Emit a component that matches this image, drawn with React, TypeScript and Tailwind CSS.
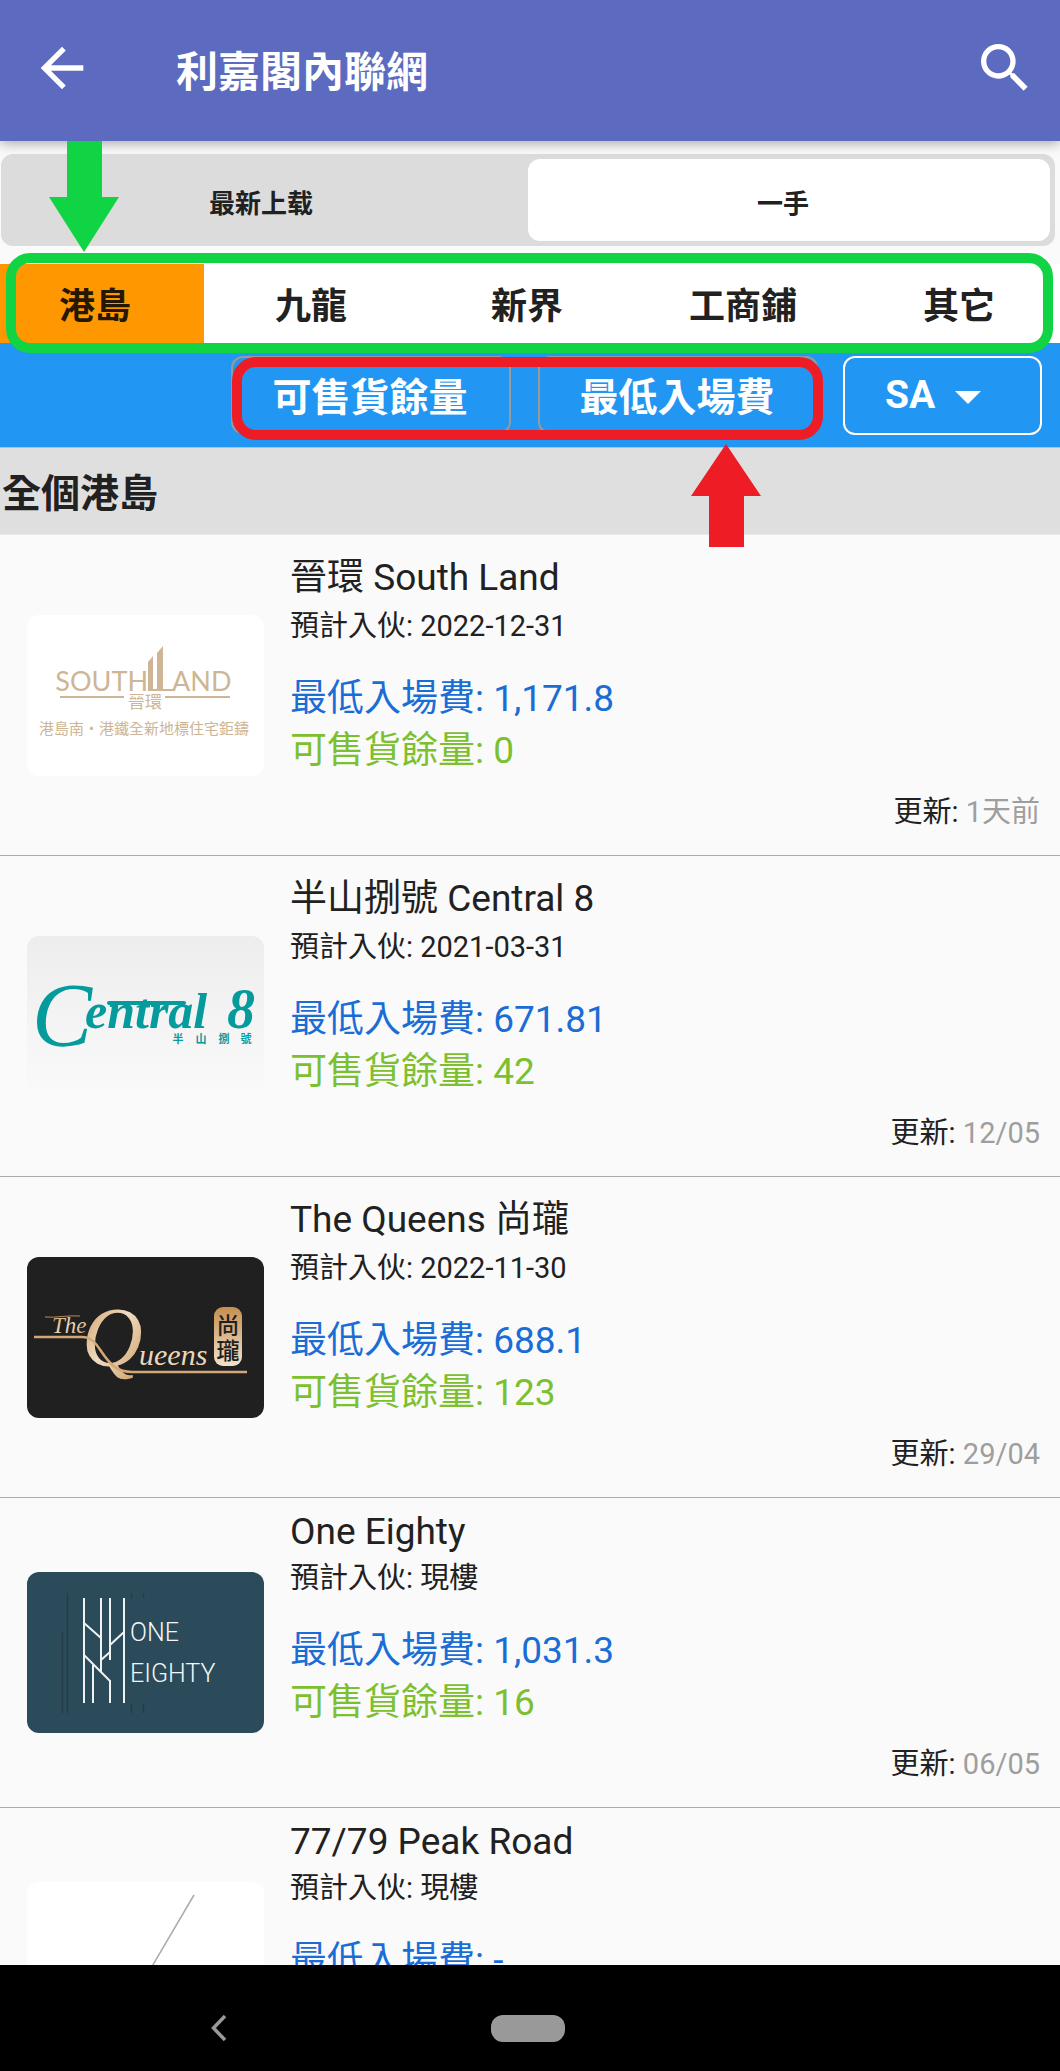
import React from "react";
import { MdArrowBack, MdSearch } from "react-icons/md";

const serif = "Liberation Serif, serif";
const cjk = "Noto Sans CJK TC, sans-serif";

function SouthLandLogo() {
  return (
    <svg viewBox="0 0 237 161" className="h-full w-full bg-white" role="img" aria-label="South Land">
      <g fill="#cdb595">
        <text x="121" y="76" fontSize="27" textAnchor="end" fontFamily="Lato, sans-serif">SOUTH</text>
        <text x="145" y="76" fontSize="27" fontFamily="Lato, sans-serif">AND</text>
        <path d="M121 76V47l5-6v33h4V38l6-7v43h11v2z" />
        <path d="M33 81h64v2H33zM138 81h65v2h-65z" />
        <text x="118" y="93" fontSize="17" textAnchor="middle" fontFamily={cjk}>晉環</text>
        <text x="117" y="119" fontSize="15" textAnchor="middle" fontFamily={cjk}>港島南·港鐵全新地標住宅鉅鑄</text>
      </g>
    </svg>
  );
}

function CentralLogo() {
  return (
    <svg
      viewBox="0 0 237 161"
      className="h-full w-full bg-linear-to-b from-[#ededed] to-[#fafafa]"
      role="img"
      aria-label="Central 8"
    >
      <g fill="#059a9c" fontFamily={serif} fontStyle="italic">
        <text x="5" y="110" fontSize="90">C</text>
        <text x="58" y="92" fontSize="50" fontWeight="700">entral</text>
        <text x="200" y="92" fontSize="56" fontWeight="700">8</text>
      </g>
      <path d="M82 67h75" stroke="#059a9c" strokeWidth="4" strokeLinecap="round" />
      <g fill="#059a9c" fontSize="11" fontFamily={cjk} fontWeight="700" textAnchor="middle">
        <text x="151" y="107">半</text>
        <text x="174" y="107">山</text>
        <text x="197" y="107">捌</text>
        <text x="219" y="107">號</text>
      </g>
    </svg>
  );
}

function QueensLogo() {
  return (
    <svg viewBox="0 0 237 161" className="h-full w-full bg-[#202020]" role="img" aria-label="The Queens">
      <defs>
        <linearGradient id="gold" x1="0" y1="0" x2="1" y2="1">
          <stop offset="0" stopColor="#c79255" />
          <stop offset="0.5" stopColor="#f0dcc0" />
          <stop offset="1" stopColor="#c9985f" />
        </linearGradient>
        <linearGradient id="badge" x1="0" y1="0" x2="0" y2="1">
          <stop offset="0" stopColor="#c58f50" />
          <stop offset="1" stopColor="#f1e2cc" />
        </linearGradient>
      </defs>
      <g fontFamily={serif} fontStyle="italic" fill="url(#gold)">
        <text x="25" y="76" fontSize="23">The</text>
        <text x="55" y="109" fontSize="84">Q</text>
        <text x="112" y="108" fontSize="30" fill="#ecd6b8">ueens</text>
      </g>
      <path d="M18 60c12 1 22-2 35-1" fill="none" stroke="#b98b58" strokeWidth="1" />
      <path d="M7 80h48c9 0 13 5 19 14 10 15 17 21 31 21h115" fill="none" stroke="#d3a877" strokeWidth="2.5" />
      <rect x="187" y="50" width="28" height="59" rx="9" fill="url(#badge)" />
      <g fill="#202020" fontSize="23" fontFamily={cjk} fontWeight="500" textAnchor="middle">
        <text x="201" y="77">尚</text>
        <text x="201" y="102">瓏</text>
      </g>
    </svg>
  );
}

function OneEightyLogo() {
  return (
    <svg viewBox="0 0 237 161" className="h-full w-full bg-[#2b4b5a]" role="img" aria-label="One Eighty">
      <path d="M40.500 21v120M104.500 21v5M116.500 21v5M104.500 132v9M116.500 132v9M35.500 60v81" stroke="#243c47" strokeWidth="1.500" />
      <path
        d="M57 26v105M66 93v38M74 26v74M83 26v62M83 108v23M97 26v105M57 51l17 15M97 60L83 73M83 80l-9 8M57 83l26 26"
        fill="none"
        stroke="#eef3f4"
        strokeWidth="2"
      />
      <g fill="#f4f7f7" fontFamily="Roboto, sans-serif" fontWeight="300">
        <text x="103" y="69" fontSize="25">ONE</text>
        <text x="103" y="110" fontSize="25">EIGHTY</text>
      </g>
    </svg>
  );
}

function PeakRoadLogo() {
  return (
    <svg viewBox="0 0 237 161" className="h-full w-full bg-white" role="img" aria-label="77/79 Peak Road">
      <path d="M167 13L90 144" stroke="#aaaaaa" strokeWidth="1.500" />
    </svg>
  );
}

const listings = [
  { name: "晉環 South Land", ready: "2022-12-31", price: "1,171.8", stock: "0", updated: "1天前", Logo: SouthLandLogo },
  { name: "半山捌號 Central 8", ready: "2021-03-31", price: "671.81", stock: "42", updated: "12/05", Logo: CentralLogo },
  { name: "The Queens 尚瓏", ready: "2022-11-30", price: "688.1", stock: "123", updated: "29/04", Logo: QueensLogo },
  { name: "One Eighty", ready: "現樓", price: "1,031.3", stock: "16", updated: "06/05", Logo: OneEightyLogo },
  { name: "77/79 Peak Road", ready: "現樓", price: "-", stock: "-", updated: "06/05", Logo: PeakRoadLogo },
];

const regions = ["港島", "九龍", "新界", "工商鋪", "其它"];

export default function App() {
  return (
    <div
      lang="zh-HK"
      className="flex h-screen flex-col overflow-hidden bg-[#fafafa] font-[Roboto,'Noto_Sans_CJK_TC',sans-serif] text-[#212121]"
    >
      <header className="z-10 flex h-[141px] shrink-0 items-center bg-[#5c6abf] pr-[23px] pb-1.5 pl-[30px] text-white shadow-[0_2px_12px_rgba(0,0,0,0.35)]">
        <button aria-label="返回">
          <MdArrowBack size={64} />
        </button>
        <h1 className="ml-[82px] flex-1 pt-2.5 text-[42px] leading-[60px] font-bold">利嘉閣內聯網</h1>
        <button aria-label="搜尋">
          <MdSearch size={64} />
        </button>
      </header>

      <div className="mt-[13px] mr-[5px] ml-px flex h-[92px] shrink-0 rounded-xl bg-[#dcdcdc] p-[5px] text-[26px] font-bold">
        <button className="flex-1 rounded-xl pt-2 pr-3">最新上载</button>
        <button className="flex-1 rounded-xl bg-white pt-2 pr-3" aria-pressed="true">
          一手
        </button>
      </div>

      <div className="relative z-20 mt-[18px] shrink-0">
        <nav className="overflow-hidden bg-white">
          <div className="-mr-2 -ml-3 flex h-[79px]">
            {regions.map((r, i) => (
              <button
                key={r}
                className={
                  i === 0
                    ? "flex-1 bg-[#ff9800] pt-1.5 pr-0.5 text-4xl font-bold text-[#261700]"
                    : "flex-1 pt-1.5 pr-0.5 text-4xl font-bold"
                }
              >
                {r}
              </button>
            ))}
          </div>
        </nav>
        <div className="pointer-events-none absolute -top-[11px] right-[7px] -bottom-2.5 left-1.5 rounded-3xl border-10 border-[#10d444]" />
        <svg viewBox="0 0 70 111" className="absolute -top-[123px] left-[49px] h-[111px] w-[70px]" aria-hidden="true">
          <path d="M18 0h35v56h17L35 111 0 56h18z" fill="#10d444" />
        </svg>
      </div>

      <div className="z-10 flex h-[105px] shrink-0 items-start justify-end gap-[25px] border-b border-[#b0c4d6] bg-[#2196f3] pt-[13px] pr-[18px] text-[39px] font-bold text-white">
        <div className="relative flex gap-[27px]">
          <button className="h-[78px] w-[280px] rounded-xl border-2 border-[#999999] pt-1.5 pr-0.5 leading-[56px]">可售貨餘量</button>
          <button className="h-[78px] w-[280px] rounded-xl border-2 border-[#999999] pt-1.5 pr-0.5 leading-[56px]">最低入場費</button>
          <div className="pointer-events-none absolute top-px -right-[5px] -bottom-1.5 left-px rounded-3xl border-10 border-[#ee1c25]" />
          <svg viewBox="0 0 70 103" className="absolute top-[88px] right-[57px] h-[103px] w-[70px]" aria-hidden="true">
            <path d="M35 0l35 52H53v51H18V52H0z" fill="#ee1c25" />
          </svg>
        </div>
        <div className="relative h-[79px] w-[199px]">
          <select
            aria-label="面積"
            className="h-full w-full appearance-none rounded-xl border-2 border-white bg-transparent pl-10 font-bold"
          >
            <option>SA</option>
          </select>
          <svg viewBox="0 0 26 13" className="pointer-events-none absolute top-[35px] left-28 h-[13px] w-[26px]" aria-hidden="true">
            <path d="M0 0h26L13 13z" fill="white" />
          </svg>
        </div>
      </div>

      <h2 className="h-[87px] shrink-0 border-b border-[#e8e8e8] bg-[#dfdfdf] pt-[18px] pl-0.5 text-[39px] leading-[56px] font-bold">
        全個港島
      </h2>

      <ul className="min-h-0 flex-1 overflow-hidden">
        {listings.map(({ name, ready, price, stock, updated, Logo }) => (
          <li key={name} className="flex items-center border-b border-[#ababab] pr-5 pl-[27px]">
            <div className="h-[161px] w-[237px] shrink-0 overflow-hidden rounded-xl">
              <Logo />
            </div>
            <div className="ml-[26px] flex flex-1 flex-col pt-3 pb-[22px]">
              <h3 className="pb-1 text-[37px] font-normal [line-height:normal]">{name}</h3>
              <p className="text-[29px] leading-[42px]">預計入伙: {ready}</p>
              <p className="mt-[26px] text-[37px] leading-[52px] text-[#1b6dd6]">最低入場費: {price}</p>
              <p className="text-[37px] leading-[52px] text-[#7cc02f]">可售貨餘量: {stock}</p>
              <p className="mt-3.5 self-end text-[29px] leading-[42px]">
                更新: <span className="text-[#9e9e9e]">{updated}</span>
              </p>
            </div>
          </li>
        ))}
      </ul>

      <footer className="grid h-[106px] shrink-0 grid-cols-5 items-center bg-black pt-5 pr-1">
        <button aria-label="上一頁" className="col-start-2 justify-self-start">
          <svg viewBox="0 0 16 26" className="h-[26px] w-4" aria-hidden="true">
            <path d="M14 1L2.500 13 14 25" fill="none" stroke="#999999" strokeWidth="3.500" />
          </svg>
        </button>
        <button aria-label="主頁" className="col-start-3 h-[27px] w-[74px] justify-self-center rounded-xl bg-[#999999]" />
      </footer>
    </div>
  );
}
